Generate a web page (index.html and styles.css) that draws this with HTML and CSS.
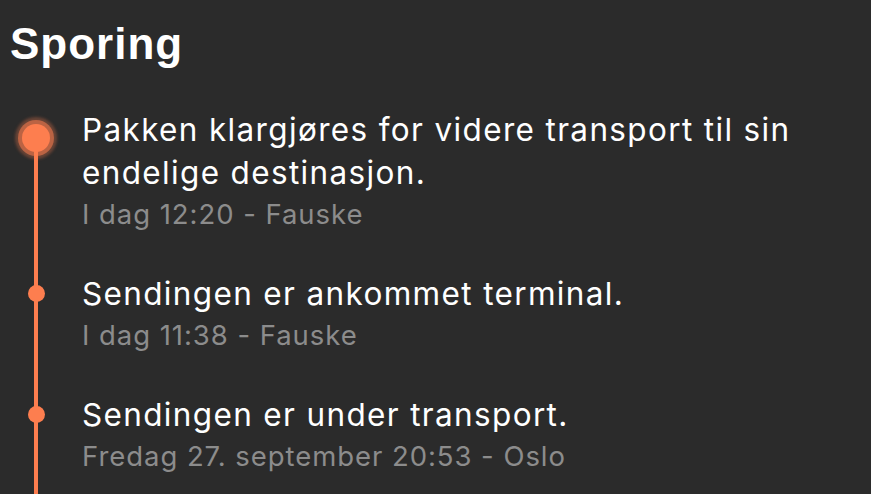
FILE: index.html
```html
<!DOCTYPE html>
<html lang="no">
<head>
<meta charset="utf-8">
<link rel="stylesheet" href="styles.css">
</head>
<body>
<main class="page">
  <h1 class="title">Sporing</h1>
  <ol class="timeline">
    <li class="event">
      <span class="marker"><span class="dot dot-current"></span></span>
      <div class="info">
        <p class="desc">Pakken klargjøres for videre transport til sin endelige destinasjon.</p>
        <p class="meta">I dag 12:20 - Fauske</p>
      </div>
    </li>
    <li class="event">
      <span class="marker"><span class="dot"></span></span>
      <div class="info">
        <p class="desc">Sendingen er ankommet terminal.</p>
        <p class="meta">I dag 11:38 - Fauske</p>
      </div>
    </li>
    <li class="event">
      <span class="marker"><span class="dot"></span></span>
      <div class="info">
        <p class="desc">Sendingen er under transport.</p>
        <p class="meta">Fredag 27. september 20:53 - Oslo</p>
      </div>
    </li>
  </ol>
</main>
</body>
</html>
```

FILE: styles.css
```css
html, body {
  margin: 0;
  padding: 0;
  background: #2b2b2b;
  height: 100%;
  overflow: hidden;
}
.page {
  padding: 14px 0 0 10px;
  font-family: Inter, "Noto Sans", sans-serif;
  color: #ffffff;
}
.title {
  margin: 0;
  font-family: "Liberation Sans", Arial, sans-serif;
  font-weight: 700;
  font-size: 44px;
  line-height: 60px;
  letter-spacing: 1px;
}
.timeline {
  list-style: none;
  margin: 34px 0 0 0;
  padding: 0 0 200px 0;
  display: flex;
  flex-direction: column;
  gap: 40px;
  background: linear-gradient(#fd7e4f, #fd7e4f) no-repeat 24px 30px / 4px 100%;
}
.event {
  display: grid;
  grid-template-columns: 72px 1fr;
}
.marker {
  display: flex;
  justify-content: center;
  padding-top: 13px;
  height: 30px;
  padding-right: 20px;
}
.dot {
  width: 17px;
  height: 17px;
  border-radius: 50%;
  background: #fd7e4f;
}
.dot-current {
  width: 28px;
  height: 28px;
  margin-top: 3px;
  box-shadow: 0 0 0 4px rgba(253, 126, 79, 0.55), 0 0 3px 7px rgba(253, 126, 79, 0.3);
}
.info {
  padding-right: 40px;
}
.desc {
  margin: 0;
  font-size: 31.5px;
  line-height: 43px;
  letter-spacing: 1.35px;
  color: #ffffff;
}
.meta {
  margin: 2px 0 0 0;
  font-size: 27.5px;
  line-height: 36px;
  letter-spacing: 0.95px;
  color: #8c8c8c;
}
```
